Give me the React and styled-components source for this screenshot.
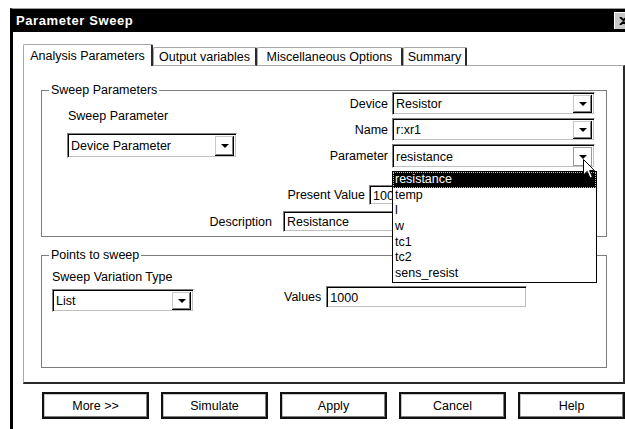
import React from "react"
import styled, { createGlobalStyle, css } from "styled-components"

const GlobalStyle = createGlobalStyle`
    html, body {
        margin: 0;
        padding: 0;
        background: #fff;
    }
    body {
        font-family: "Liberation Sans", Arial, sans-serif;
        font-size: 12.5px;
        color: #000;
        overflow: hidden;
    }
`

const sunken = css`
    border: 1px solid;
    border-color: #808080 #fff #fff #808080;
    box-shadow: inset 1px 1px 0 #000, inset -1px -1px 0 #c0c0c0;
    background: #fff;
    box-sizing: border-box;
`

const Window = styled.div`
    margin: 8px 0 0 10px;
    width: 620px;
    height: 440px;
    border-top: 1px solid #9c9c9c;
    border-left: 3px solid #000;
    display: flex;
    flex-direction: column;
`

const TitleBar = styled.div`
    height: 23px;
    flex: none;
    background: #000;
    color: #fff;
    display: flex;
    align-items: center;
    justify-content: space-between;
    padding-left: 3px;
    font-weight: bold;
    font-size: 13px;
    letter-spacing: 0.6px;
`

const CloseButton = styled.div`
    width: 16px;
    height: 16px;
    margin-right: 2px;
    background: #c8c8c8;
    border-top: 1px solid #fff;
    border-left: 1px solid #fff;
    display: flex;
    align-items: center;
    justify-content: center;
`

const Body = styled.div`
    flex: 1;
    padding: 12px 0 0 10px;
    display: flex;
    flex-direction: column;
`

const TabRow = styled.div`
    display: flex;
    align-items: flex-end;
    height: 22px;
    margin-bottom: -1px;
    position: relative;
    z-index: 1;
`

const Tab = styled.div`
    width: ${p => p.$width}px;
    height: ${p => (p.$active ? 22 : 19)}px;
    box-sizing: border-box;
    display: flex;
    align-items: center;
    justify-content: center;
    background: #fff;
    border-top: 1px solid #a8a8a8;
    border-left: 1px solid #a8a8a8;
    border-right: 2px solid #2a2a2a;
    border-bottom: ${p => (p.$active ? "none" : "1px solid #a8a8a8")};
    border-radius: 2px 2px 0 0;
    white-space: nowrap;
`

const Panel = styled.div`
    width: 602px;
    height: 319px;
    box-sizing: border-box;
    border-top: 1px solid #a8a8a8;
    border-left: 1px solid #a8a8a8;
    border-right: 2px solid #2a2a2a;
    border-bottom: 2px solid #2a2a2a;
    padding-top: 24px;
    display: flex;
    flex-direction: column;
`

const Group = styled.div`
    margin: ${p => p.$top}px 16px 0 17px;
    height: ${p => p.$height}px;
    box-sizing: border-box;
    border: 1px solid #7c7c7c;
    display: flex;
    flex-direction: column;
`

const Legend = styled.div`
    align-self: flex-start;
    margin: -8px 0 0 7px;
    padding: 0 2px;
    height: 14px;
    line-height: 14px;
    background: #fff;
`

const Label = styled.div`
    line-height: 14px;
    margin: ${p => p.$top}px 0 0 ${p => p.$left}px;
    white-space: nowrap;
`

const TopSection = styled.div`
    display: flex;
    align-items: flex-start;
`

const LeftCol = styled.div`
    display: flex;
    flex-direction: column;
    align-items: flex-start;
`

const RightCol = styled.div`
    margin: 1px 11px 0 auto;
    display: grid;
    grid-template-columns: auto 203px;
    column-gap: 4px;
    row-gap: 3px;
    align-items: center;
    justify-items: end;
`

const Combo = styled.div`
    ${sunken};
    position: relative;
    width: ${p => p.$width}px;
    height: ${p => p.$height || 23}px;
    margin: ${p => p.$margin || 0};
    display: flex;
    align-items: stretch;
    padding: 2px 2px 1px 3px;
`

const ComboText = styled.div`
    flex: 1;
    display: flex;
    align-items: center;
    white-space: nowrap;
`

const ArrowButton = styled.div`
    width: 19px;
    flex: none;
    display: flex;
    align-items: center;
    justify-content: center;
    box-sizing: border-box;
    background: #fff;
    ${p =>
        p.$pressed
            ? css`
                  border: 1px solid #9a9a9a;
              `
            : css`
                  box-shadow: inset -1px -1px 0 #000, inset 1px 1px 0 #c8c8c8,
                      inset -2px -2px 0 #808080;
              `}
`

const Triangle = styled.div`
    width: 0;
    height: 0;
    border-left: 4px solid transparent;
    border-right: 4px solid transparent;
    border-top: 4px solid #000;
`

const DropList = styled.div`
    position: absolute;
    top: calc(100% + 4px);
    left: -1px;
    width: 205px;
    box-sizing: border-box;
    border: 1px solid #000;
    background: #fff;
    z-index: 5;
`

const DropItem = styled.div`
    height: 15.7px;
    line-height: 15.7px;
    padding-left: 2px;
    box-sizing: border-box;
    ${p =>
        p.$selected &&
        css`
            background: #000;
            color: #fff;
            outline: 1px dotted #bbb;
            outline-offset: -1px;
        `}
`

const Cursor = styled.svg`
    position: absolute;
    left: 190px;
    top: 14px;
    z-index: 6;
`

const FieldRow = styled.div`
    display: grid;
    grid-template-columns: ${p => p.$label}px ${p => p.$field}px;
    column-gap: ${p => p.$gap}px;
    align-items: center;
    margin-top: ${p => p.$top}px;
    justify-items: start;
`

const RowLabel = styled.div`
    justify-self: end;
    white-space: nowrap;
`

const TextField = styled.div`
    ${sunken};
    width: ${p => p.$width}px;
    height: ${p => p.$height}px;
    display: flex;
    align-items: center;
    padding: 1px 0 0 3px;
    white-space: nowrap;
`

const VariationRow = styled.div`
    display: flex;
    align-items: flex-start;
`

const ValuesGroup = styled.div`
    display: flex;
    align-items: center;
    margin: 2px 0 0 90px;
    gap: 5px;
`

const ButtonRow = styled.div`
    display: flex;
    gap: 12px;
    margin: 8px 0 0 19px;
`

const Button = styled.div`
    width: 107px;
    height: 27px;
    box-sizing: border-box;
    border: 2px solid #111;
    box-shadow: inset -1px -1px 0 #808080, inset 1px 1px 0 #c4c4c4;
    display: flex;
    align-items: center;
    justify-content: center;
    background: #fff;
    flex: none;
`

function ComboBox({ value, width, height, margin, pressed, children }) {
    return (
        <Combo $width={width} $height={height} $margin={margin}>
            <ComboText>{value}</ComboText>
            <ArrowButton $pressed={pressed}>
                <Triangle />
            </ArrowButton>
            {children}
        </Combo>
    )
}

const paramOptions = ["resistance", "temp", "l", "w", "tc1", "tc2", "sens_resist"]
const tabs = [
    { name: "Analysis Parameters", width: 130 },
    { name: "Output variables", width: 104 },
    { name: "Miscellaneous Options", width: 146 },
    { name: "Summary", width: 64 },
]
const buttons = ["More >>", "Simulate", "Apply", "Cancel", "Help"]

export default function App() {
    return (
        <>
            <GlobalStyle />
            <Window>
                <TitleBar>
                    <span>Parameter Sweep</span>
                    <CloseButton>
                        <svg width="9" height="8" viewBox="0 0 9 8">
                            <path d="M1 0 L4.5 3.2 L8 0 M1 8 L4.5 4.8 L8 8" stroke="#000" strokeWidth="2" fill="none" />
                        </svg>
                    </CloseButton>
                </TitleBar>
                <Body>
                    <TabRow>
                        {tabs.map((t, i) => (
                            <Tab key={t.name} $active={i === 0} $width={t.width}>{t.name}</Tab>
                        ))}
                    </TabRow>
                    <Panel>
                        <Group $top={0} $height={147}>
                            <TopSection>
                                <LeftCol>
                                    <Legend>Sweep Parameters</Legend>
                                    <Label $top={12} $left={26}>Sweep Parameter</Label>
                                    <ComboBox value="Device Parameter" width={170} height={25} margin="10px 0 0 25px" />
                                </LeftCol>
                                <RightCol>
                                    <RowLabel>Device</RowLabel>
                                    <ComboBox value="Resistor" width={203} />
                                    <RowLabel>Name</RowLabel>
                                    <ComboBox value="r:xr1" width={203} />
                                    <RowLabel>Parameter</RowLabel>
                                    <ComboBox value="resistance" width={203} height={24} pressed>
                                        <DropList>
                                            {paramOptions.map((o, i) => (
                                                <DropItem key={o} $selected={i === 0}>{o}</DropItem>
                                            ))}
                                        </DropList>
                                        <Cursor width="13" height="21" viewBox="0 0 13 21">
                                            <path
                                                d="M0.5 0.5 L0.5 16 L4.2 12.4 L7 19 L9.4 18 L6.6 11.6 L11.5 11.6 Z"
                                                fill="#fff"
                                                stroke="#000"
                                                strokeWidth="1"
                                            />
                                        </Cursor>
                                    </ComboBox>
                                </RightCol>
                            </TopSection>
                            <FieldRow $label={323} $field={150} $gap={4} $top={17}>
                                <RowLabel>Present Value</RowLabel>
                                <TextField $width={150} $height={20}>1000</TextField>
                            </FieldRow>
                            <FieldRow $label={230} $field={270} $gap={11} $top={6}>
                                <RowLabel>Description</RowLabel>
                                <TextField $width={270} $height={21}>Resistance</TextField>
                            </FieldRow>
                        </Group>
                        <Group $top={18} $height={113}>
                            <Legend>Points to sweep</Legend>
                            <Label $top={8} $left={10}>Sweep Variation Type</Label>
                            <VariationRow>
                                <ComboBox value="List" width={142} margin="5px 0 0 10px" />
                                <ValuesGroup>
                                    <span>Values</span>
                                    <TextField $width={201} $height={22}>1000</TextField>
                                </ValuesGroup>
                            </VariationRow>
                        </Group>
                    </Panel>
                    <ButtonRow>
                        {buttons.map(b => (
                            <Button key={b}>{b}</Button>
                        ))}
                    </ButtonRow>
                </Body>
            </Window>
        </>
    )
}
